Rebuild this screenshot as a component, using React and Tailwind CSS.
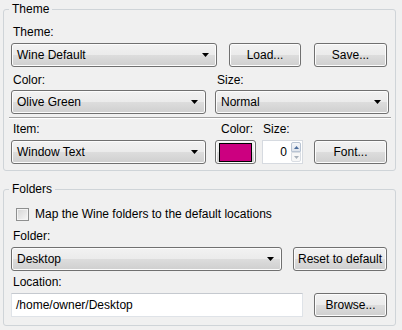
const font = "font-['Liberation_Sans',Arial,sans-serif] text-[12px] leading-[14px] text-black"

const btnBg =
  "border border-[#707070] rounded-[3px] bg-[linear-gradient(#f2f2f2,#ebebeb_50%,#dddddd_50%,#cfcfcf)] shadow-[inset_0_0_0_1px_#fcfcfc]"

const Arrow = () => (
  <svg width="7" height="4" viewBox="0 0 7 4" className="shrink-0">
    <path d="M0 0H7L3.5 4Z" fill="#000" />
  </svg>
)

const Combo = ({ value, className }) => (
  <div className={`${btnBg} h-[24px] flex items-center justify-between pl-[5px] pr-[7px] ${className}`}>
    <span>{value}</span>
    <Arrow />
  </div>
)

const Button = ({ children, className }) => (
  <div className={`${btnBg} h-[24px] flex items-center justify-center ${className}`}>{children}</div>
)

const Label = ({ children, className = "" }) => <div className={`h-[14px] ${className}`}>{children}</div>

const Group = ({ title, children, className = "" }) => (
  <fieldset className={`w-[393px] border border-[#cfd4d8] rounded-[3px] ${className}`}>
    <legend className="ml-[5px] px-[3px] leading-[14px]">{title}</legend>
    {children}
  </fieldset>
)

const SpinBox = () => (
  <div className="w-[41px] h-[24px] border border-[#d6dae0] bg-white flex items-stretch">
    <div className="flex-1 flex items-center justify-end pr-[4px]">0</div>
    <div className="w-[10px] flex flex-col my-[1px] mr-[1px]">
      <div className="flex-1 border border-[#b9c4d3] rounded-t-[2px] bg-[linear-gradient(#f4f6f9,#dfe4ec)] flex items-center justify-center">
        <svg width="5" height="3" viewBox="0 0 5 3">
          <path d="M0 3H5L2.5 0Z" fill="#4a6c9b" />
        </svg>
      </div>
      <div className="flex-1 border border-[#d9dde3] rounded-b-[2px] bg-[#f7f7f7] flex items-center justify-center">
        <svg width="5" height="3" viewBox="0 0 5 3">
          <path d="M0 0H5L2.5 3Z" fill="#a8b0ba" />
        </svg>
      </div>
    </div>
  </div>
)

export default function App() {
  return (
    <div className={`w-[402px] h-[330px] bg-[#f0f0f0] pl-[3px] pt-[2px] ${font}`}>
      <Group title="Theme">
        <div className="pt-[9px] pl-[7px] pb-[6px]">
          <Label className="pl-[2px]">Theme:</Label>
          <div className="mt-[4px] flex">
            <Combo value="Wine Default" className="w-[206px]" />
            <Button className="w-[72px] ml-[12px]">Load...</Button>
            <Button className="w-[73px] ml-[13px]">Save...</Button>
          </div>
          <div className="mt-[6px] flex">
            <Label className="pl-[2px] w-[204px]">Color:</Label>
            <Label className="pl-[2px]">Size:</Label>
          </div>
          <div className="mt-[3px] flex">
            <Combo value="Olive Green" className="w-[195px]" />
            <Combo value="Normal" className="w-[174px] ml-[9px]" />
          </div>
          <div className="mt-[3px] -ml-[2px] w-[382px] border-t border-[#a0a0a0] border-b border-b-white" />
          <div className="mt-[3px] flex">
            <Label className="pl-[2px] w-[210px]">Item:</Label>
            <Label className="w-[42px]">Color:</Label>
            <Label>Size:</Label>
          </div>
          <div className="mt-[4px] flex">
            <Combo value="Window Text" className="w-[195px]" />
            <Button className="w-[41px] ml-[9px] !justify-start">
              <div className="ml-[3px] w-[33px] h-[19px] border border-black bg-[#cc0080]" />
            </Button>
            <div className="ml-[6px]">
              <SpinBox />
            </div>
            <Button className="w-[73px] ml-[11px]">Font...</Button>
          </div>
        </div>
      </Group>

      <Group title="Folders" className="mt-[11px]">
        <div className="pt-[11px] pl-[7px] pb-[8px]">
          <div className="flex items-center h-[14px] pl-[5px]">
            <div className="w-[13px] h-[13px] border border-[#8e8f8f] bg-[linear-gradient(135deg,#d4d4d4,#f7f7f7)] shadow-[inset_0_0_0_1px_#f4f4f4]" />
            <span className="ml-[6px]">Map the Wine folders to the default locations</span>
          </div>
          <Label className="mt-[8px] pl-[2px]">Folder:</Label>
          <div className="mt-[4px] flex">
            <Combo value="Desktop" className="w-[271px]" />
            <Button className="w-[94px] ml-[11px]">Reset to default</Button>
          </div>
          <Label className="mt-[4px] pl-[2px]">Location:</Label>
          <div className="mt-[4px] flex">
            <div className="w-[292px] h-[24px] bg-white border border-[#dfe3e8] border-t-[#c5c9cf] flex items-center pl-[4px]">
              /home/owner/Desktop
            </div>
            <Button className="w-[73px] ml-[11px]">Browse...</Button>
          </div>
        </div>
      </Group>
    </div>
  )
}
